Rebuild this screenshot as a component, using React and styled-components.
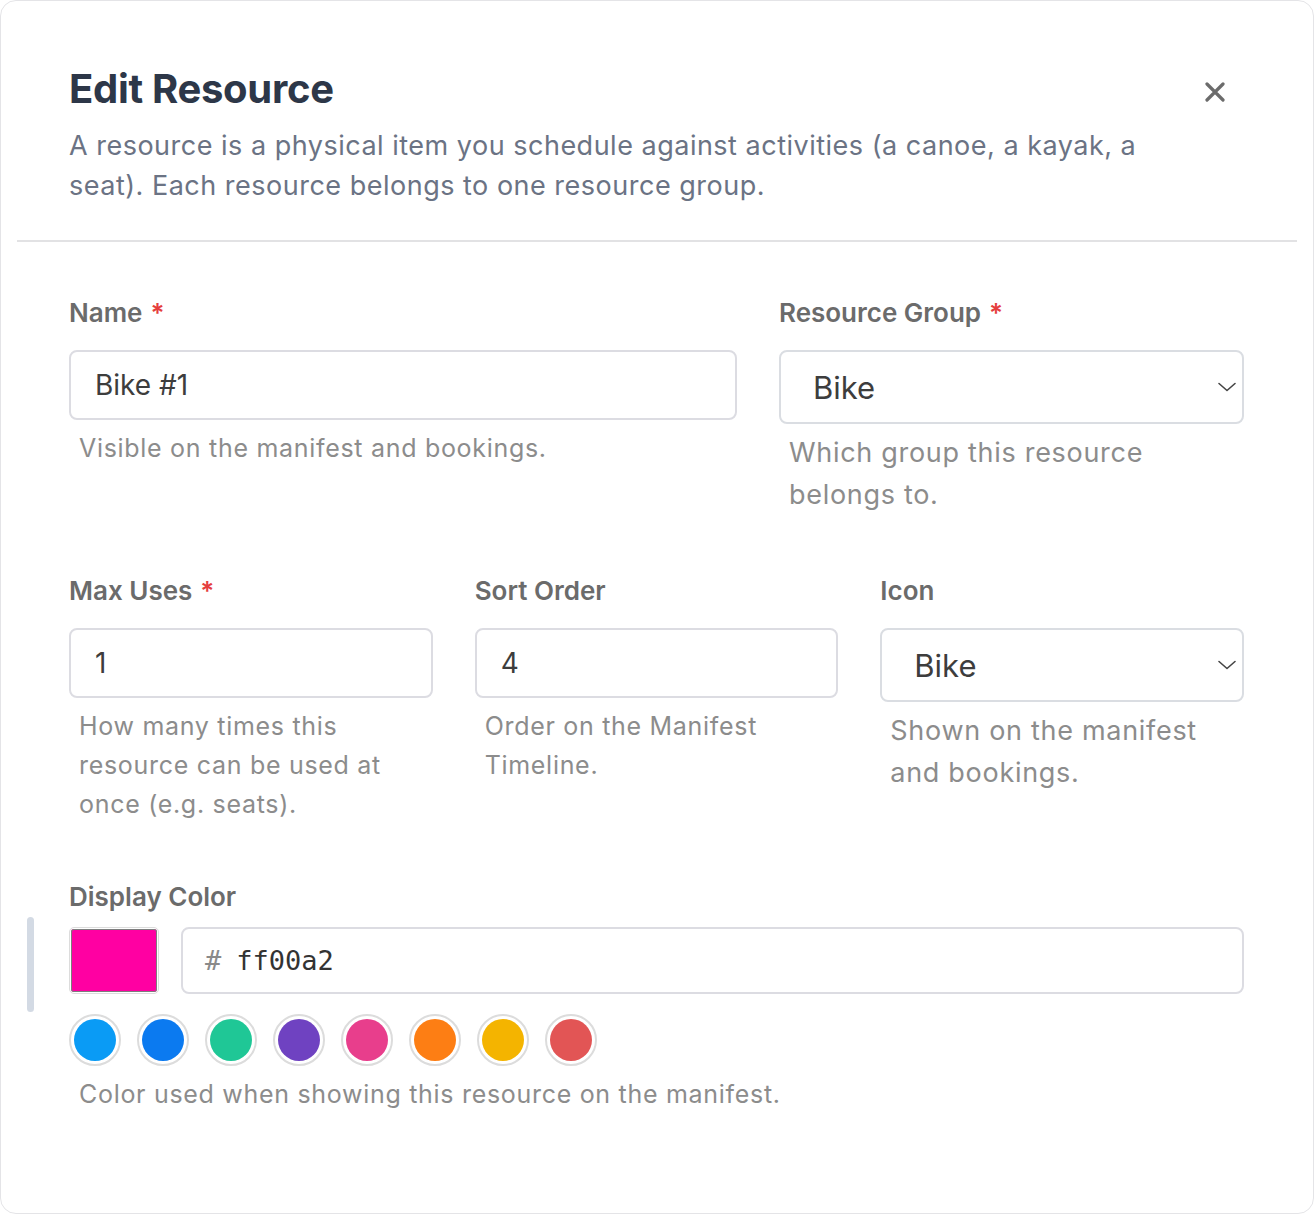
import React from "react";
import styled, { createGlobalStyle } from "styled-components";

const GlobalStyle = createGlobalStyle`
  html, body {
    margin: 0;
    padding: 0;
    background: #ffffff;
  }
  * {
    box-sizing: border-box;
  }
`;

const Panel = styled.div`
  position: relative;
  width: 1314px;
  height: 1214px;
  border: 1px solid #e4e4e7;
  border-radius: 16px;
  background: #ffffff;
  font-family: "Inter", "Noto Sans", sans-serif;
  overflow: hidden;
`;

const Header = styled.div`
  margin: 0 16px;
  padding: 64px 52px 34px;
  border-bottom: 2px solid #e2e2e4;
  .titleRow {
    display: flex;
    justify-content: space-between;
    align-items: flex-start;
  }
  h1 {
    margin: 0;
    font-size: 40px;
    line-height: 48px;
    font-weight: 700;
    color: #2d3748;
    letter-spacing: -0.3px;
  }
  p {
    margin: 13px 0 0;
    max-width: 1100px;
    font-size: 27px;
    line-height: 40px;
    letter-spacing: 0.5px;
    color: #6b7384;
  }
`;

const CloseButton = styled.button`
  margin: 17px 20px 0 0;
  padding: 0;
  width: 20px;
  height: 20px;
  border: 0;
  background: none;
  display: flex;
  cursor: pointer;
`;

const Body = styled.div`
  padding: 0 69px 0 68px;
  display: flex;
  flex-direction: column;
`;

const Section = styled.div`
  margin-top: ${(p) => p.$top};
`;

const Row = styled(Section)`
  display: grid;
  grid-template-columns: ${(p) => p.$columns};
  column-gap: 42px;
  align-items: start;
`;

const Field = styled.div`
  position: relative;
  display: flex;
  flex-direction: column;
  min-width: 0;
`;

const Label = styled.label`
  font-size: 26px;
  line-height: 32px;
  font-weight: 600;
  color: #6b6b6b;
  margin-bottom: ${(p) => p.$gap || "21px"};
  span {
    color: #e53e3e;
    margin-left: 8px;
  }
`;

const TextInput = styled.div`
  height: 70px;
  border: 2px solid #dcdce2;
  border-radius: 8px;
  padding: 0 24px;
  display: flex;
  align-items: center;
  font-size: 28px;
  color: #3d3d3d;
`;

const Select = styled.div`
  height: 74px;
  border: 2px solid #dadde2;
  border-radius: 8px;
  padding: 0 5px 0 32px;
  display: flex;
  align-items: center;
  justify-content: space-between;
  font-size: 31px;
  color: #3d3d3d;
`;

const Help = styled.div`
  margin-top: ${(p) => (p.$large ? "8px" : "9px")};
  padding-left: 10px;
  font-size: ${(p) => (p.$large ? "27px" : "25px")};
  line-height: ${(p) => (p.$large ? "42px" : "39px")};
  letter-spacing: 0.7px;
  color: #8c8c8c;
`;

const ColorRow = styled.div`
  display: flex;
  align-items: center;
  gap: 22px;
`;

const Swatch = styled.div`
  width: 90px;
  height: 67px;
  border: 1px solid #dcdcdc;
  border-radius: 5px;
  padding: 1px;
  div {
    width: 100%;
    height: 100%;
    border-radius: 3px;
    background: ${(p) => p.$color};
    box-shadow: inset 0 0 0 1px #7d7d7d;
  }
`;

const HexInput = styled.div`
  flex: 1;
  height: 67px;
  border: 2px solid #dcdce2;
  border-radius: 8px;
  padding: 0 22px;
  display: flex;
  align-items: center;
  font-family: "DejaVu Sans Mono", "Liberation Mono", monospace;
  font-size: 27px;
  color: #333;
  .hash {
    color: #8a8a8a;
    margin-right: 15px;
  }
`;

const Presets = styled.div`
  display: flex;
  gap: 16px;
  margin-top: 20px;
`;

const Preset = styled.button`
  width: 52px;
  height: 52px;
  padding: 3px;
  border: 2px solid #dcdcdc;
  border-radius: 50%;
  background: #fff;
  cursor: pointer;
  div {
    width: 100%;
    height: 100%;
    border-radius: 50%;
    background: ${(p) => p.$color};
  }
`;

const SideMarker = styled.div`
  position: absolute;
  left: -42px;
  top: 36px;
  width: 7px;
  height: 95px;
  border-radius: 4px;
  background: #d3dae4;
`;

const Chevron = () => (
  <svg width="20" height="20" viewBox="0 0 20 20" fill="none">
    <path d="M2 6.5l8 7 8-7" stroke="#444" strokeWidth="1.6" strokeLinecap="round" strokeLinejoin="round" />
  </svg>
);

const presetColors = [
  "#0a9bf5",
  "#0b7af0",
  "#1fc796",
  "#6f42c1",
  "#e83e8c",
  "#fd7e14",
  "#f4b400",
  "#e25555",
];

export default function App() {
  return (
    <>
      <GlobalStyle />
      <Panel>
        <Header>
          <div className="titleRow">
            <h1>Edit Resource</h1>
            <CloseButton aria-label="Close">
              <svg width="20" height="20" viewBox="0 0 20 20" fill="none">
                <path d="M2 2l16 16M18 2L2 18" stroke="#6b6b6b" strokeWidth="3.2" strokeLinecap="round" />
              </svg>
            </CloseButton>
          </div>
          <p>
            A resource is a physical item you schedule against activities (a canoe, a kayak, a
            seat). Each resource belongs to one resource group.
          </p>
        </Header>

        <Body>
          <Row $top="55px" $columns="668fr 465fr">
            <Field>
              <Label>
                Name<span>*</span>
              </Label>
              <TextInput>Bike #1</TextInput>
              <Help>Visible on the manifest and bookings.</Help>
            </Field>
            <Field>
              <Label>
                Resource Group<span>*</span>
              </Label>
              <Select>
                Bike
                <Chevron />
              </Select>
              <Help $large>Which group this resource belongs to.</Help>
            </Field>
          </Row>

          <Row $top="59px" $columns="1fr 1fr 1fr">
            <Field>
              <Label>
                Max Uses<span>*</span>
              </Label>
              <TextInput>1</TextInput>
              <Help>How many times this resource can be used at once (e.g. seats).</Help>
            </Field>
            <Field>
              <Label>Sort Order</Label>
              <TextInput>4</TextInput>
              <Help>Order on the Manifest Timeline.</Help>
            </Field>
            <Field>
              <Label>Icon</Label>
              <Select>
                Bike
                <Chevron />
              </Select>
              <Help $large>Shown on the manifest and bookings.</Help>
            </Field>
          </Row>

          <Section $top="57px">
            <Field>
              <SideMarker />
              <Label $gap="14px">Display Color</Label>
              <ColorRow>
                <Swatch $color="#ff00a2">
                  <div />
                </Swatch>
                <HexInput>
                  <span className="hash">#</span>ff00a2
                </HexInput>
              </ColorRow>
              <Presets>
                {presetColors.map((c) => (
                  <Preset key={c} $color={c} aria-label={c}>
                    <div />
                  </Preset>
                ))}
              </Presets>
              <Help>Color used when showing this resource on the manifest.</Help>
            </Field>
          </Section>
        </Body>
      </Panel>
    </>
  );
}
